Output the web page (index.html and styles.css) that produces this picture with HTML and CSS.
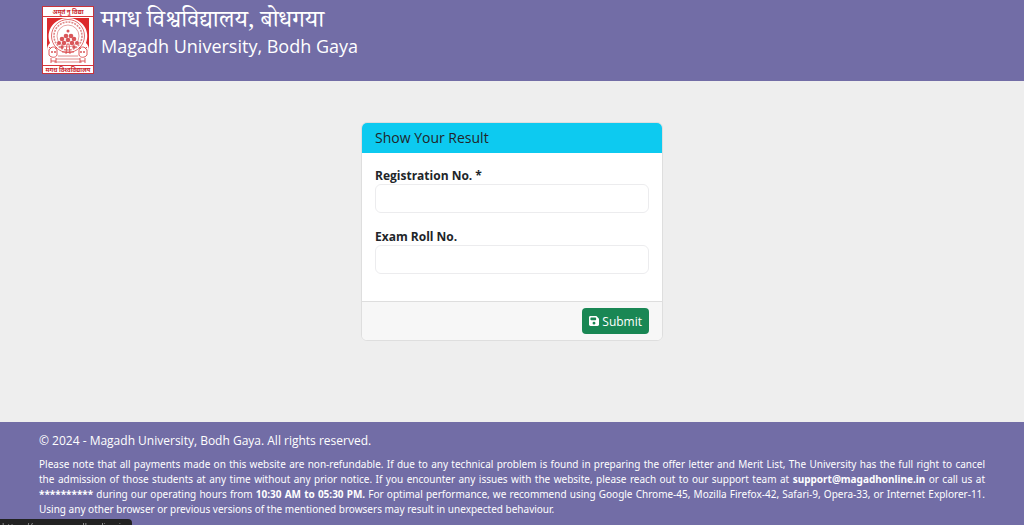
FILE: index.html
```html
<!DOCTYPE html>
<html lang="en">
<head>
    <meta charset="UTF-8">
    <meta name="viewport" content="width=device-width, initial-scale=1.0">
    <title>Magadh University, Bodh Gaya - Result</title>
    <link rel="stylesheet" href="styles.css">
</head>
<body>

    <header class="site-header">
        <svg class="logo" viewBox="0 0 52 68" role="img" aria-label="Magadh University logo">
            <rect x="0.5" y="0.5" width="51" height="67" fill="#fff" stroke="#c9333b"/>
            <text class="logo-text" x="26" y="8">अमृतं नु विद्या</text>
            <rect x="1" y="10" width="50" height="1" fill="#d8353a"/>
            <rect x="5" y="12" width="42" height="46" fill="#dc2a2c"/>
            <path d="M5 58V45C5 41 6 39 8 37C3 25 12 12 26 12S49 25 44 37C46 39 47 41 47 45V58Z" fill="#fff"/>
            <g fill="none" stroke="#e08a8a">
                <circle cx="26" cy="30" r="16.5" stroke="#d9474a" stroke-width="0.8"/>
                <circle cx="26" cy="30" r="14" stroke-width="1.6" stroke-dasharray="2 1"/>
                <circle cx="26" cy="30" r="11" stroke-width="0.8"/>
                <path d="M16 50H36M14 53H38M12 56H40"/>
            </g>
            <g fill="none" stroke="#d9474a" stroke-width="0.9">
                <path d="M24 48L25 38H27L28 48M20 46H32"/>
                <path d="M7 44C9 40 14 40 15 44V49C14 52 9 52 7 49ZM37 44C38 40 43 40 45 44V49C43 52 38 52 37 49ZM7 41L9 43M15 41L13 43M37 41L39 43M45 41L43 43M9 52V57M14 52V57M38 52V57M43 52V57M9 55H14M38 55H43"/>
            </g>
            <g fill="#d9575a">
                <circle cx="17" cy="37" r="2"/><circle cx="20" cy="33" r="2.3"/><circle cx="24" cy="30" r="2.3"/>
                <circle cx="29" cy="30" r="2.3"/><circle cx="32" cy="33" r="2.3"/><circle cx="35" cy="37" r="2"/>
                <circle cx="22" cy="37" r="2.3"/><circle cx="30" cy="37" r="2.3"/><circle cx="26" cy="34" r="2.3"/>
                <circle cx="20" cy="41" r="1.8"/><circle cx="32" cy="41" r="1.8"/><circle cx="26" cy="25" r="1.5"/>
                <circle cx="10" cy="46" r="1"/><circle cx="13" cy="46" r="1"/>
                <circle cx="39" cy="46" r="1"/><circle cx="42" cy="46" r="1"/>
            </g>
            <rect x="1" y="59" width="50" height="1" fill="#d8353a"/>
            <text class="logo-text" x="26" y="66">मगध विश्वविद्यालय</text>
        </svg>
        <div class="site-name">
            <div class="name-hi" lang="hi">मगध विश्वविद्यालय, बोधगया</div>
            <div class="name-en">Magadh University, Bodh Gaya</div>
        </div>
    </header>

    <main>
        <form class="card">
            <div class="card-header">Show Your Result</div>
            <div class="card-body">
                <div class="form-group">
                    <label for="regNo">Registration No. *</label>
                    <input type="text" id="regNo" name="regNo">
                </div>
                <div class="form-group">
                    <label for="rollNo">Exam Roll No.</label>
                    <input type="text" id="rollNo" name="rollNo">
                </div>
            </div>
            <div class="card-footer">
                <button type="submit">
                    <svg class="icon" viewBox="0 32 448 448" aria-hidden="true"><path fill="currentColor" fill-rule="evenodd" d="M64 32C29 32 0 61 0 96V416C0 451 29 480 64 480H384C419 480 448 451 448 416V173C448 156 441 140 429 128L352 51C340 39 324 32 307 32H64ZM64 128C64 110 78 96 96 96H288C306 96 320 110 320 128V192C320 210 306 224 288 224H96C78 224 64 210 64 192V128ZM224 288A64 64 0 1 1 224 416A64 64 0 1 1 224 288Z"/></svg>
                    Submit
                </button>
            </div>
        </form>
    </main>

    <footer class="site-footer">
        <p class="copyright">© 2024 - Magadh University, Bodh Gaya. All rights reserved.</p>
        <p class="notice">Please note that all payments made on this website are non-refundable. If due to any technical problem is found in preparing the offer letter and Merit List, The University has the full right to cancel the&nbsp;admission of those students at any time without any prior notice. If you encounter any issues with the website, please reach out to our support team at <b>support@magadhonline.in</b> or call us at <b>**********</b> during our operating hours from <b>10:30 AM to 05:30 PM.</b> For optimal performance, we recommend using Google Chrome-45, Mozilla Firefox-42, Safari-9, Opera-33, or Internet Explorer-11. Using any other browser or previous versions of the mentioned browsers may result in unexpected behaviour.</p>
    </footer>

    <div class="status-bar">https://www.magadhonline.in</div>

</body>
</html>
```
FILE: styles.css
```css
* {
    box-sizing: border-box;
}

body {
    display: flex;
    flex-direction: column;
    min-height: 100vh;
    margin: 0;
    background-color: #eeeeee;
    color: #212529;
    font-family: "Open Sans", "Noto Sans", sans-serif;
    font-size: 12px;
}

.site-header {
    display: flex;
    gap: 7px;
    padding: 6px 42px 7px;
    background-color: #726da6;
    color: #fff;
}

.logo {
    width: 52px;
    height: 68px;
}

.logo-text {
    font-size: 6px;
    font-weight: bold;
    text-anchor: middle;
    fill: #c9242c;
}

.name-hi {
    padding-top: 4px;
    font-family: "Noto Serif Devanagari", "Noto Sans Devanagari", "Noto Sans", serif;
    font-size: 24px;
    line-height: 28px;
}

.name-en {
    font-size: 18px;
    font-weight: 500;
    line-height: 16px;
}

main {
    flex: 1;
    padding: 41px 20px;
}

.card {
    max-width: 302px;
    margin: 0 auto;
    background-color: #fff;
    border: 1px solid #dedede;
    border-radius: 6px;
    overflow: hidden;
}

.card-header {
    padding: 4px 13px;
    background-color: #0dcaf0;
    font-size: 14px;
    line-height: 22px;
}

.card-body {
    padding: 15px 13px 11px;
}

.form-group {
    margin-bottom: 16px;
}

label {
    display: block;
    font-weight: bold;
    line-height: 16px;
}

input {
    display: block;
    width: 100%;
    height: 29px;
    padding: 4px 10px;
    border: 1px solid #ececee;
    border-radius: 6px;
    font: inherit;
}

.card-footer {
    display: flex;
    justify-content: flex-end;
    padding: 6px 13px;
    border-top: 1px solid #dedede;
    background-color: #f7f7f7;
}

button {
    display: flex;
    align-items: center;
    gap: 3px;
    height: 26px;
    padding: 0 7px;
    background-color: #198754;
    color: #fff;
    border: none;
    border-radius: 4px;
    font: inherit;
    cursor: pointer;
}

.icon {
    width: 10px;
    height: 10px;
}

.site-footer {
    padding: 10px 39px 8px;
    background-color: #726da6;
    color: #fff;
}

.site-footer p {
    margin: 0;
}

.site-footer .copyright {
    margin-bottom: 7px;
    line-height: 18px;
}

.site-footer .notice {
    font-family: "Noto Sans", sans-serif;
    font-size: 10px;
    line-height: 15px;
    text-align: justify;
}

/* link preview in the window corner, mostly below the fold */
.status-bar {
    position: fixed;
    left: 0;
    top: calc(100vh - 6px);
    width: 132px;
    height: 20px;
    padding: 1px 2px;
    background-color: #222;
    color: #aaa;
    border-radius: 0 4px 0 0;
    font-size: 9px;
    line-height: 14px;
    white-space: nowrap;
    overflow: hidden;
}
```
